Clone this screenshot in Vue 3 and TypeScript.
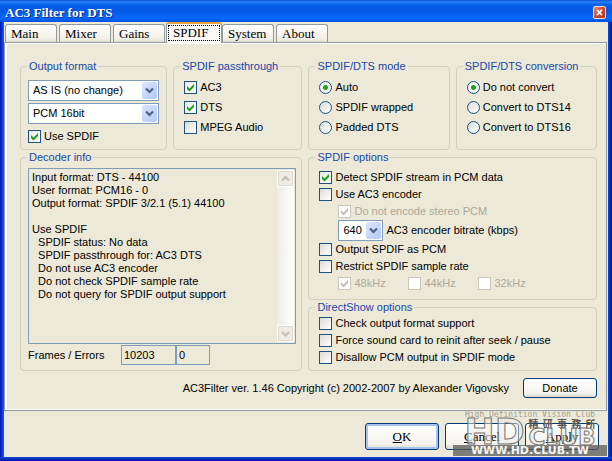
<script setup lang="ts">
import { ref } from 'vue'

const tabs = ['Main', 'Mixer', 'Gains', 'SPDIF', 'System', 'About']
const activeTab = ref('SPDIF')

const outputFormat = ref('AS IS (no change)')
const sampleFormat = ref('PCM 16bit')
const useSpdif = ref(true)
const bitrate = ref('640')

const passthrough = ref([
  { label: 'AC3', on: true },
  { label: 'DTS', on: true },
  { label: 'MPEG Audio', on: false },
])

const modes = ['Auto', 'SPDIF wrapped', 'Padded DTS']
const mode = ref('Auto')
const conversions = ['Do not convert', 'Convert to DTS14', 'Convert to DTS16']
const conversion = ref('Do not convert')

const detectStream = ref(true)
const useEncoder = ref(false)
const skipStereo = ref(true)
const asPcm = ref(false)
const restrictRate = ref(false)
const rates = ref([
  { label: '48kHz', on: true },
  { label: '44kHz', on: false },
  { label: '32kHz', on: false },
])

const directShow = ref([
  { label: 'Check output format support', on: false },
  { label: 'Force sound card to reinit after seek / pause', on: false },
  { label: 'Disallow PCM output in SPDIF mode', on: false },
])

const decoderInfo = [
  'Input format: DTS - 44100',
  'User format: PCM16 - 0',
  'Output format: SPDIF 3/2.1 (5.1) 44100',
  '',
  'Use SPDIF',
  '  SPDIF status: No data',
  '  SPDIF passthrough for: AC3 DTS',
  '  Do not use AC3 encoder',
  '  Do not check SPDIF sample rate',
  '  Do not query for SPDIF output support',
].join('\n')
</script>

<template>
  <div class="window">
    <header class="titlebar">
      <h1>AC3 Filter for DTS</h1>
      <button class="close" type="button" aria-label="Close">
        <svg viewBox="0 0 13 13" width="13" height="13">
          <path d="M3.5 3.5l6 6M9.5 3.5l-6 6" stroke="#fff" stroke-width="2" />
        </svg>
      </button>
    </header>

    <div class="client">
      <nav class="tabs" role="tablist">
        <button
          v-for="tab in tabs"
          :key="tab"
          type="button"
          role="tab"
          class="tab"
          :class="{ active: tab === activeTab }"
          :aria-selected="tab === activeTab"
          @click="activeTab = tab"
        >
          <span>{{ tab }}</span>
        </button>
      </nav>

      <main class="panel">
        <div class="columns">
          <div class="column">
            <div class="pair pair-left">
              <fieldset class="group">
                <legend>Output format</legend>
                <div class="stack">
                  <div class="combo">
                    <select v-model="outputFormat" aria-label="Output format">
                      <option>AS IS (no change)</option>
                    </select>
                    <svg class="arrow" viewBox="0 0 15 17" width="15" height="17">
                      <path d="M4 6.5l3.5 3.5L11 6.5" fill="none" stroke="#4d6185" stroke-width="2.2" />
                    </svg>
                  </div>
                  <div class="combo">
                    <select v-model="sampleFormat" aria-label="Sample format">
                      <option>PCM 16bit</option>
                    </select>
                    <svg class="arrow" viewBox="0 0 15 17" width="15" height="17">
                      <path d="M4 6.5l3.5 3.5L11 6.5" fill="none" stroke="#4d6185" stroke-width="2.2" />
                    </svg>
                  </div>
                  <label class="row spaced"><input v-model="useSpdif" type="checkbox" />Use SPDIF</label>
                </div>
              </fieldset>

              <fieldset class="group choices">
                <legend>SPDIF passthrough</legend>
                <label v-for="item in passthrough" :key="item.label" class="row">
                  <input v-model="item.on" type="checkbox" />{{ item.label }}
                </label>
              </fieldset>
            </div>

            <fieldset class="group decoder">
              <legend>Decoder info</legend>
              <div class="log">
                <textarea readonly aria-label="Decoder info" :value="decoderInfo"></textarea>
                <div class="scrollbar">
                  <button type="button" aria-label="Scroll up">
                    <svg viewBox="0 0 13 13" width="13" height="13">
                      <path d="M3 8.5l3.5-3.5L10 8.5" fill="none" stroke="#c3c1b2" stroke-width="2.2" />
                    </svg>
                  </button>
                  <button type="button" aria-label="Scroll down">
                    <svg viewBox="0 0 13 13" width="13" height="13">
                      <path d="M3 5l3.5 3.5L10 5" fill="none" stroke="#c3c1b2" stroke-width="2.2" />
                    </svg>
                  </button>
                </div>
              </div>
              <div class="counters">
                <label for="frames">Frames / Errors</label>
                <input id="frames" class="frames" type="text" readonly value="10203" />
                <input class="errors" type="text" readonly value="0" aria-label="Errors" />
              </div>
            </fieldset>
          </div>

          <div class="column">
            <div class="pair">
              <fieldset class="group choices">
                <legend>SPDIF/DTS mode</legend>
                <label v-for="item in modes" :key="item" class="row">
                  <input v-model="mode" type="radio" name="mode" :value="item" />{{ item }}
                </label>
              </fieldset>
              <fieldset class="group choices">
                <legend>SPDIF/DTS conversion</legend>
                <label v-for="item in conversions" :key="item" class="row">
                  <input v-model="conversion" type="radio" name="conversion" :value="item" />{{ item }}
                </label>
              </fieldset>
            </div>

            <fieldset class="group options">
              <legend>SPDIF options</legend>
              <label class="row"><input v-model="detectStream" type="checkbox" />Detect SPDIF stream in PCM data</label>
              <label class="row"><input v-model="useEncoder" type="checkbox" />Use AC3 encoder</label>
              <label class="row indent off"><input v-model="skipStereo" type="checkbox" disabled />Do not encode stereo PCM</label>
              <div class="bitrate indent">
                <div class="combo small">
                  <select id="bitrate" v-model="bitrate">
                    <option>640</option>
                  </select>
                  <svg class="arrow" viewBox="0 0 15 17" width="15" height="17">
                    <path d="M4 6.5l3.5 3.5L11 6.5" fill="none" stroke="#4d6185" stroke-width="2.2" />
                  </svg>
                </div>
                <label for="bitrate">AC3 encoder bitrate (kbps)</label>
              </div>
              <label class="row"><input v-model="asPcm" type="checkbox" />Output SPDIF as PCM</label>
              <label class="row"><input v-model="restrictRate" type="checkbox" />Restrict SPDIF sample rate</label>
              <div class="rates indent">
                <label v-for="rate in rates" :key="rate.label" class="row off">
                  <input v-model="rate.on" type="checkbox" disabled />{{ rate.label }}
                </label>
              </div>
            </fieldset>

            <fieldset class="group directshow">
              <legend>DirectShow options</legend>
              <label v-for="item in directShow" :key="item.label" class="row">
                <input v-model="item.on" type="checkbox" />{{ item.label }}
              </label>
            </fieldset>
          </div>
        </div>

        <div class="about">
          <p>AC3Filter ver. 1.46 Copyright (c) 2002-2007 by Alexander Vigovsky</p>
          <button class="push" type="button">Donate</button>
        </div>
      </main>

      <footer class="actions">
        <button class="push default" type="button"><u>O</u>K</button>
        <button class="push" type="button"><u>C</u>ancel</button>
        <button class="push" type="button"><u>A</u>pply</button>
      </footer>
    </div>

    <div class="watermark">
      <div class="tagline">High Definition Vision Club</div>
      <div class="brand">
        <span class="hd">HD</span>
        <span class="side">
          <span class="office"><i>精</i><i>研</i><i>事</i><i>務</i><i>所</i></span>
          <span class="club">CLUB</span>
        </span>
      </div>
      <div class="url">WWW.HD.CLUB.TW</div>
    </div>
  </div>
</template>

<style>
body {
  margin: 0;
  background: #ece9d8;
}
</style>

<style scoped>
* {
  box-sizing: border-box;
}

.window {
  position: relative;
  display: flex;
  flex-direction: column;
  min-height: 100vh;
  font: 11px/13px 'Liberation Sans', Arial, sans-serif;
  color: #000;
}

.titlebar {
  display: flex;
  align-items: center;
  justify-content: space-between;
  height: 22px;
  padding: 3px 6px 0 5px;
  background: linear-gradient(#0a4fd0 0, #2a80f8 2px, #0560ea 5px, #0558e4 10px, #0668fb 18px, #0353dc 100%);
}

h1 {
  margin: 0;
  font: bold 13px/16px 'Liberation Serif', 'Times New Roman', serif;
  color: #fff;
  text-shadow: 1px 1px #0a2f8c;
}

.close {
  display: flex;
  padding: 0;
  border: 1px solid #f4dcd6;
  border-radius: 2px;
  background: linear-gradient(135deg, #e8886c, #c8402c 60%, #a83a2a);
}

.close svg {
  width: 11px;
  height: 11px;
}

.client {
  flex: 1;
  display: flex;
  flex-direction: column;
  padding: 0 4px 4px;
  background:
    linear-gradient(#1048d8, #0012a0) bottom / 100% 4px no-repeat,
    linear-gradient(90deg, #0012b0, #1560ea) left / 4px 100% no-repeat,
    linear-gradient(90deg, #0a48d8, #0012a0) right / 4px 100% no-repeat,
    #ece9d8;
}

.tabs {
  display: flex;
  align-items: flex-end;
  gap: 2px;
  height: 20px;
  padding-left: 1px;
}

.tab {
  width: 52px;
  height: 18px;
  padding: 0 0 0 5px;
  border: 1px solid #919b9c;
  border-bottom: 0;
  border-radius: 3px 3px 0 0;
  background: linear-gradient(#fff, #f2f0e6 80%, #e2dfcf);
  font: 13px/17px 'Liberation Serif', 'Times New Roman', serif;
  color: #000;
  text-align: left;
}

.tab.active {
  z-index: 1;
  width: 56px;
  height: 21px;
  margin: 0 -2px -1px -1px;
  padding: 0 1px 2px;
  border-top: 2px solid #e8a33d;
  background: #fbfaf7;
}

.tab.active span {
  display: block;
  padding-left: 4px;
  border: 1px dotted #000;
  line-height: 14px;
}

.panel {
  flex: 1;
  margin-right: 1px;
  padding: 15px 9px 11px 13px;
  border: solid #fff;
  border-width: 2px 1px 2px 3px;
  outline: 1px solid #919b9c;
  outline-offset: -1px;
}

.columns {
  display: grid;
  grid-template-columns: minmax(0, 282fr) minmax(0, 288fr);
  gap: 6px;
}

.column {
  display: flex;
  flex-direction: column;
}

.pair {
  display: grid;
  grid-template-columns: minmax(0, 1fr) minmax(0, 1fr);
  gap: 6px;
  min-height: 91px;
}

.pair-left {
  grid-template-columns: minmax(0, 147fr) minmax(0, 129fr);
}

.group {
  min-width: 0;
  margin: 0;
  padding: 4px 7px;
  border: 1px solid #d0d0bf;
  border-radius: 4px;
}

legend {
  margin-left: -1px;
  padding: 0 2px;
  line-height: 14px;
  white-space: nowrap;
  color: #1a46a8;
}

.stack {
  display: flex;
  flex-direction: column;
  gap: 2px;
  padding-top: 3px;
}

.row {
  display: flex;
  align-items: center;
  gap: 3px;
  height: 17px;
  white-space: nowrap;
}

.row.spaced {
  margin-top: 2px;
}

.choices .row {
  height: 20px;
}

.choices > .row,
.options > .row,
.directshow > .row {
  margin-left: 3px;
}

.options > .indent {
  margin-left: 22px;
}

input[type='checkbox'],
input[type='radio'] {
  appearance: none;
  flex: none;
  width: 13px;
  height: 13px;
  margin: 0;
  border: 1px solid #1c5180;
  background: linear-gradient(135deg, #dcdcd7, #fff);
}

input[type='radio'] {
  border-radius: 50%;
}

input[type='checkbox']:checked {
  background:
    url("data:image/svg+xml,%3Csvg xmlns='http://www.w3.org/2000/svg' viewBox='0 0 11 11'%3E%3Cpath d='M2 4v3l2.500 2.500L9 5V2L4.500 6.500z' fill='%2321a121'/%3E%3C/svg%3E"),
    linear-gradient(135deg, #e8e8e4, #fff);
}

input[type='radio']:checked {
  background: radial-gradient(circle, #21a121 0 2px, #f4f4f1 3px);
}

input[type='checkbox']:disabled {
  border-color: #cac8bb;
  background: #fff;
}

input[type='checkbox']:disabled:checked {
  background: #fff
    url("data:image/svg+xml,%3Csvg xmlns='http://www.w3.org/2000/svg' viewBox='0 0 11 11'%3E%3Cpath d='M2 4v3l2.500 2.500L9 5V2L4.500 6.500z' fill='%23c3c1b2'/%3E%3C/svg%3E");
}

.off {
  color: #aca899;
}

.combo {
  position: relative;
  height: 21px;
}

.combo.small {
  width: 45px;
}

select {
  appearance: none;
  width: 100%;
  height: 100%;
  padding: 0 18px 0 4px;
  border: 1px solid #7f9db9;
  border-radius: 0;
  background: #fff;
  font: inherit;
  color: #000;
}

.arrow {
  position: absolute;
  top: 2px;
  right: 2px;
  border-radius: 2px;
  background: linear-gradient(135deg, #dbe6fd, #b4c8f6);
  pointer-events: none;
}

.decoder {
  flex: 1;
  display: flex;
  flex-direction: column;
  padding-bottom: 5px;
}

.log {
  flex: 1;
  display: flex;
  min-height: 176px;
  margin-right: -2px;
  padding: 1px;
  border: 1px solid #7f9db9;
}

textarea {
  flex: 1;
  min-width: 0;
  padding: 1px 2px;
  border: 0;
  outline: 0;
  background: none;
  font: inherit;
  color: #000;
  resize: none;
  overflow: hidden;
  white-space: pre;
}

.scrollbar {
  display: flex;
  flex-direction: column;
  justify-content: space-between;
  background: linear-gradient(90deg, #f0eee4, #fefefb);
}

.scrollbar button {
  display: flex;
  padding: 1px;
  border: 1px solid #fff;
  border-radius: 2px;
  background: #eeede5;
  box-shadow: inset 0 0 0 1px #dddbcf;
}

.counters {
  display: flex;
  align-items: center;
  margin-top: 1px;
}

.counters label {
  width: 93px;
}

.counters input {
  height: 20px;
  padding: 0 2px;
  border: 1px solid #7f9db9;
  background: none;
  font: inherit;
  color: #000;
}

.frames {
  width: 55px;
}

.errors {
  width: 34px;
}

.options {
  padding: 5px 7px 7px;
}

.bitrate {
  display: flex;
  align-items: center;
  gap: 3px;
}

.rates {
  display: grid;
  grid-template-columns: repeat(3, 70px);
}

.directshow {
  padding: 1px 7px 4px;
}

.about {
  display: flex;
  align-items: center;
  justify-content: flex-end;
  gap: 14px;
  margin-top: 7px;
}

p {
  margin: 0;
}

.push {
  width: 74px;
  height: 20px;
  padding: 0;
  border: 1px solid #003c74;
  border-radius: 3px;
  background: linear-gradient(#fff, #f4f3ee 80%, #dcd8cc);
  font: inherit;
  color: #000;
}

.actions {
  display: flex;
  justify-content: flex-end;
  gap: 6px;
  padding: 12px 9px 7px;
}

.actions .push {
  height: 27px;
  font: 13px/15px 'Liberation Serif', 'Times New Roman', serif;
}

.push.default {
  box-shadow: inset 0 0 0 2px #a9c3f0;
}

.watermark {
  position: absolute;
  right: 5px;
  bottom: 5px;
  width: 154px;
  pointer-events: none;
}

.tagline {
  font: 8px/8px 'DejaVu Sans Mono', monospace;
  text-align: center;
  color: #a09e94;
}

.brand {
  display: flex;
  justify-content: center;
  gap: 4px;
  height: 26px;
  font-family: 'DejaVu Sans', sans-serif;
  font-weight: bold;
  color: rgba(236, 236, 232, 0.5);
  -webkit-text-stroke: 1px #77756e;
}

.hd {
  font-size: 36px;
  line-height: 26px;
}

.side {
  display: flex;
  flex-direction: column;
}

.office {
  display: flex;
  justify-content: space-between;
  font: bold 10px/10px 'Noto Sans CJK TC', sans-serif;
  color: #55534e;
  -webkit-text-stroke: 0;
}

.office i {
  font-style: normal;
}

.club {
  font-size: 23px;
  line-height: 16px;
}

.url {
  background: rgba(90, 90, 88, 0.75);
  font: bold 11px/11px 'DejaVu Sans', sans-serif;
  text-align: center;
  color: #f4f4f4;
}
</style>
